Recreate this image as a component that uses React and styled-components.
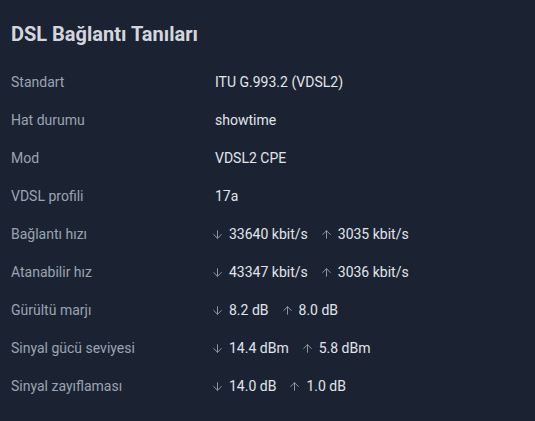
import React from 'react';
import styled, { createGlobalStyle } from 'styled-components';
import { ArrowDown, ArrowUp } from 'lucide-react';

const GlobalStyle = createGlobalStyle`
  html, body {
    margin: 0;
    padding: 0;
    background: #1b2333;
  }
  body {
    font-family: Roboto, "Liberation Sans", sans-serif;
  }
`;

const Panel = styled.section`
  box-sizing: border-box;
  width: 535px;
  height: 421px;
  padding: 21px 11px 0;
  background: #1b2333;
`;

const Title = styled.h2`
  margin: 0 0 16px;
  font-size: 20px;
  line-height: 26px;
  font-weight: 700;
  color: #d3d7dd;
`;

const Table = styled.div`
  display: grid;
  grid-template-columns: 204px 1fr;
  grid-auto-rows: 38px;
  align-items: center;
  font-size: 14px;
`;

const Label = styled.div`
  color: #9ba4b0;
`;

const Value = styled.div`
  display: flex;
  align-items: center;
  gap: 16px;
  color: #e1e5ea;
`;

const Rate = styled.span`
  display: inline-flex;
  align-items: center;
  gap: 5px;

  svg {
    color: #8f98a5;
    margin-left: -4px;
  }
`;

const Arrow = ({ dir }) =>
  dir === 'down' ? <ArrowDown size={13} strokeWidth={1.8} /> : <ArrowUp size={13} strokeWidth={1.8} />;

const rows = [
  ['Standart', 'ITU G.993.2 (VDSL2)'],
  ['Hat durumu', 'showtime'],
  ['Mod', 'VDSL2 CPE'],
  ['VDSL profili', '17a'],
  ['Bağlantı hızı', ['33640 kbit/s', '3035 kbit/s']],
  ['Atanabilir hız', ['43347 kbit/s', '3036 kbit/s']],
  ['Gürültü marjı', ['8.2 dB', '8.0 dB']],
  ['Sinyal gücü seviyesi', ['14.4 dBm', '5.8 dBm']],
  ['Sinyal zayıflaması', ['14.0 dB', '1.0 dB']],
];

export default function App() {
  return (
    <>
      <GlobalStyle />
      <Panel>
        <Title>DSL Bağlantı Tanıları</Title>
        <Table>
          {rows.map(([label, value]) => (
            <React.Fragment key={label}>
              <Label>{label}</Label>
              {Array.isArray(value) ? (
                <Value>
                  <Rate><Arrow dir="down" />{value[0]}</Rate>
                  <Rate><Arrow dir="up" />{value[1]}</Rate>
                </Value>
              ) : (
                <Value>{value}</Value>
              )}
            </React.Fragment>
          ))}
        </Table>
      </Panel>
    </>
  );
}
